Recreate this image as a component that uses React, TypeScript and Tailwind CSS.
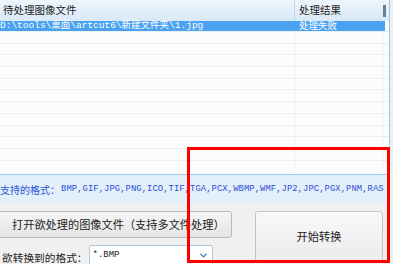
import { ChevronDown } from "lucide-react";

const cjk = { fontFamily: '"Noto Sans CJK SC", "Noto Sans", sans-serif' };
const mono = { fontFamily: '"Liberation Mono", "Noto Sans CJK SC", monospace' };

const formats = "BMP,GIF,JPG,PNG,ICO,TIF,TGA,PCX,WBMP,WMF,JP2,JPC,PGX,PNM,RAS";

function FileList() {
  const rows = Array.from({ length: 12 });
  return (
    <div className="h-[175px] w-[390px] overflow-hidden border-r border-b border-[#9ccaee] bg-[#fbfdfc]">
      <div className="flex h-[21px] bg-gradient-to-b from-[#edf5fc] to-[#d9e9f7] text-[10.5px] text-[#1a1a1a]" style={cjk}>
        <div className="flex w-[295px] items-center border-r border-[#bcd6ee] pl-[3px] leading-none">待处理图像文件</div>
        <div className="flex w-[88px] items-center pl-[4px] leading-none">处理结果</div>
        <div className="flex flex-1 items-center">
          <span className="h-[12px] w-[3px] bg-[#6f7f8c]" />
        </div>
      </div>
      <div className="flex h-[10px] w-[385px] items-center bg-[#4aa2f0] text-[9.5px] leading-none text-white" style={mono}>
        <div className="w-[295px] whitespace-nowrap">D:\tools\桌面\artcut6\新建文件夹\1.jpg</div>
        <div className="pl-[4px]" style={cjk}>处理失败</div>
      </div>
      {rows.map((_, i) => (
        <div key={i} className="flex h-[11.7px] border-t border-[#e9efeb]">
          <div className="w-[295px] border-r border-[#edf1ee]" />
          <div className="w-[88px] border-r border-[#edf1ee]" />
        </div>
      ))}
    </div>
  );
}

export default function App() {
  return (
    <div className="relative h-[264px] w-[393px] overflow-hidden bg-[#f0f0f0]">
      <FileList />
      <div className="flex h-[28px] w-[390px] items-center bg-[#e3f0fa] pt-[1px]">
        <span className="text-[10px] leading-none text-[#2b55d6]" style={cjk}>支持的格式：</span>
        <span className="ml-[1px] whitespace-nowrap text-[8.8px] leading-none tracking-[0.1px] text-[#2b4ed9]" style={mono}>{formats}</span>
      </div>
      <div className="flex gap-[23px] pl-0 pt-[8px]">
        <div className="flex flex-col">
          <button className="-ml-[2px] flex h-[27px] w-[234px] items-center rounded-[3px] border border-[#b9b9b9] bg-gradient-to-b from-[#f6f6f6] to-[#e4e4e4] pl-[13px] text-[11.2px] text-[#222]" style={cjk}>
            打开欲处理的图像文件（支持多文件处理）
          </button>
          <div className="mt-[7px] flex items-center">
            <span className="pl-[2px] pt-[3px] text-[10.7px] leading-none text-[#222]" style={cjk}>欲转换到的格式：</span>
            <div className="ml-[1px] flex h-[24px] w-[124px] items-start justify-between rounded-[2px] border border-[#a9c6e4] bg-white pl-[3px] pr-[3px] pt-[5px]">
              <span className="text-[9px] leading-none text-[#222]" style={mono}>*.BMP</span>
              <ChevronDown className="mt-[-1px] h-[11px] w-[11px] text-[#3a7bd5]" strokeWidth={3} />
            </div>
          </div>
        </div>
        <button className="flex h-[51px] w-[128px] items-center justify-center rounded-[3px] border border-[#c4c4c4] bg-gradient-to-b from-[#f8f8f8] to-[#ececec] text-[11.2px] text-[#222]" style={cjk}>
          开始转换
        </button>
      </div>
      <div className="absolute left-[187px] top-[147px] h-[116px] w-[203px] border-[3px] border-[#ff0000]" />
    </div>
  );
}
